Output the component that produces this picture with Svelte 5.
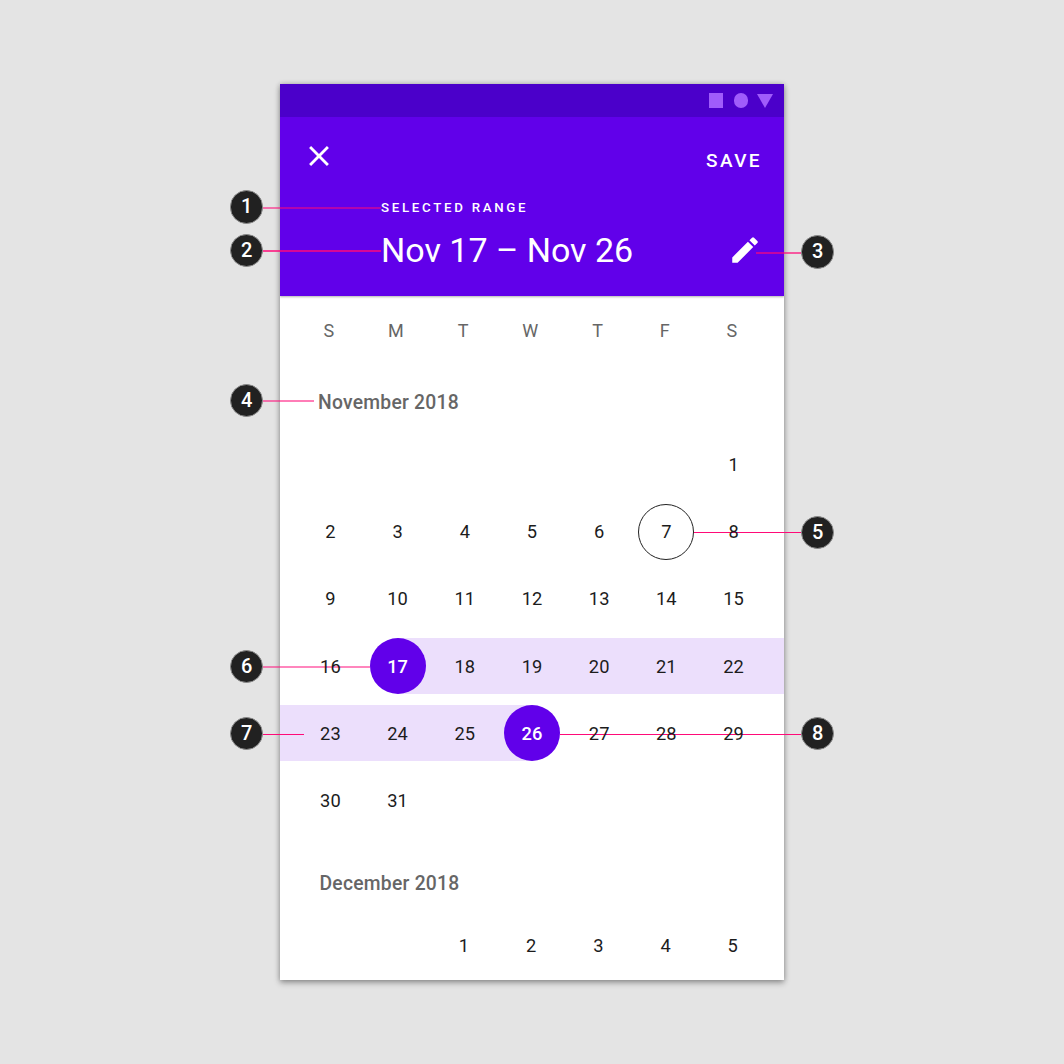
<script>
  const weekdays = ['S', 'M', 'T', 'W', 'T', 'F', 'S'];
  const november = [
    [null, null, null, null, null, null, 1],
    [2, 3, 4, 5, 6, 7, 8],
    [9, 10, 11, 12, 13, 14, 15],
    [16, 17, 18, 19, 20, 21, 22],
    [23, 24, 25, 26, 27, 28, 29],
    [30, 31, null, null, null, null, null]
  ];
  const december = [[null, null, 1, 2, 3, 4, 5]];
  const badges = [
    { n: 1, x: 246.7, y: 207 },
    { n: 2, x: 246.7, y: 250.3 },
    { n: 3, x: 817.7, y: 252 },
    { n: 4, x: 246.7, y: 400.7 },
    { n: 5, x: 817.7, y: 532.3 },
    { n: 6, x: 246.7, y: 666.3 },
    { n: 7, x: 246.7, y: 733.7 },
    { n: 8, x: 817.7, y: 733.7 }
  ];
  const lines = [
    { x: 263, y: 208, w: 118, s: 1.6, o: 0.7 },
    { x: 263, y: 251, w: 118, s: 1.4, o: 1 },
    { x: 756, y: 253, w: 45, s: 1.5, o: 0.85 },
    { x: 263, y: 401, w: 51, s: 1.4, o: 0.7 },
    { x: 694, y: 532.5, w: 107, s: 1, o: 1 },
    { x: 263, y: 667, w: 107, s: 1.6, o: 0.65 },
    { x: 263, y: 734.5, w: 41, s: 1, o: 1 },
    { x: 560, y: 734.5, w: 241, s: 1, o: 1 }
  ];
  function dayClass(d) {
    if (d === null) return 'day';
    if (d === 7) return 'day today';
    if (d === 17) return 'day start';
    if (d === 26) return 'day end';
    if (d > 17 && d < 26) return 'day inrange';
    return 'day';
  }
</script>

<div class="page">
  <section class="phone">
    <header class="header">
      <div class="status">
        <span class="sq"></span>
        <span class="ci"></span>
        <span class="tri"></span>
      </div>
      <div class="toolbar">
        <svg class="close" viewBox="0 0 24 24" width="34" height="34"><path fill="#fff" d="M19 6.41 17.59 5 12 10.59 6.41 5 5 6.41 10.59 12 5 17.59 6.41 19 12 13.41 17.59 19 19 17.59 13.41 12z"/></svg>
        <span class="save">SAVE</span>
      </div>
      <div class="label">SELECTED RANGE</div>
      <div class="rangeRow">
        <span class="range">Nov 17 – Nov 26</span>
        <svg class="edit" viewBox="0 0 24 24" width="34" height="34"><path fill="#fff" d="M3 17.25V21h3.75L17.81 9.94l-3.75-3.75L3 17.25zM20.71 7.04a1 1 0 0 0 0-1.41l-2.34-2.34a1 1 0 0 0-1.41 0l-1.83 1.83 3.75 3.75 1.83-1.83z"/></svg>
      </div>
    </header>

    <div class="week">
      {#each weekdays as w}<span>{w}</span>{/each}
    </div>

    <h2 class="month nov">November 2018</h2>
    <div class="grid">
      {#each november as row}
        <div class="row">
          {#each row as d}
            <div class={dayClass(d)}>
              {#if d !== null}<span class="num">{d}</span>{/if}
            </div>
          {/each}
        </div>
      {/each}
    </div>

    <h2 class="month dec">December 2018</h2>
    <div class="grid decgrid">
      {#each december as row}
        <div class="row decrow">
          {#each row as d}
            <div class="day">{#if d !== null}<span class="num">{d}</span>{/if}</div>
          {/each}
        </div>
      {/each}
    </div>
  </section>

  <svg class="leaders" width="1064" height="1064" viewBox="0 0 1064 1064">
    {#each lines as l}
      <line x1={l.x} x2={l.x + l.w} y1={l.y} y2={l.y} stroke="#ff0a78" stroke-width={l.s} opacity={l.o} />
    {/each}
  </svg>
  {#each badges as b}
    <b class="badge" style="left:{b.x - 16.75}px;top:{b.y - 16.75}px">{b.n}</b>
  {/each}
</div>

<style>
  :global(body) {
    margin: 0;
    background: #e4e4e4;
  }
  .page {
    position: relative;
    width: 1064px;
    height: 1064px;
    padding-top: 84px;
    box-sizing: border-box;
    overflow: hidden;
    font-family: Roboto, sans-serif;
  }
  .phone {
    width: 504px;
    height: 896px;
    margin-left: 280px;
    background: #fff;
    overflow: hidden;
    box-shadow: 0 3px 6px rgba(0, 0, 0, 0.3), 0 0 5px rgba(0, 0, 0, 0.22);
  }
  .header {
    height: 212px;
    background: #6100ea;
    color: #fff;
    box-shadow: 0 1px 2px rgba(0, 0, 0, 0.3);
    position: relative;
  }
  .status {
    height: 33px;
    background: #4b00ca;
    display: flex;
    align-items: center;
    justify-content: flex-end;
    padding-right: 11.3px;
    gap: 10.6px;
  }
  .sq {
    width: 14.5px;
    height: 14.5px;
    background: #a05cfb;
  }
  .ci {
    width: 14.5px;
    height: 14.5px;
    border-radius: 50%;
    background: #a05cfb;
  }
  .tri {
    width: 0;
    height: 0;
    border-left: 8.35px solid transparent;
    border-right: 8.35px solid transparent;
    border-top: 14px solid #a05cfb;
    margin-left: -2.3px;
  }
  .toolbar {
    display: flex;
    justify-content: space-between;
    align-items: center;
    height: 50px;
    padding: 14px 22px 0 22px;
  }
  .save {
    font-size: 19px;
    font-weight: 500;
    letter-spacing: 2.4px;
    margin-top: 9px;
  }
  .label {
    font-size: 13.3px;
    font-weight: 500;
    letter-spacing: 2.7px;
    margin: 19px 0 0 101px;
    line-height: 16px;
  }
  .rangeRow {
    display: flex;
    justify-content: space-between;
    align-items: center;
    margin: 11px 22px 0 101px;
    height: 46px;
  }
  .range {
    font-size: 34px;
    line-height: 46px;
  }
  .week {
    display: grid;
    grid-template-columns: repeat(7, 67.2px);
    padding: 25px 0 0 15.2px;
    color: #666;
    font-size: 18px;
    line-height: 20px;
    text-align: center;
  }
  .month {
    font-size: 19.3px;
    font-weight: 500;
    letter-spacing: 0.25px;
    color: #666;
    margin: 0;
    line-height: 24px;
  }
  .nov {
    padding: 50px 0 0 38px;
  }
  .dec {
    padding: 38px 0 0 39.5px;
  }
  .grid {
    margin-top: 16px;
  }
  .decgrid {
    margin-top: 16px;
  }
  .row {
    display: grid;
    grid-template-columns: repeat(7, 67.2px);
    padding: 0 16.8px;
    height: 67.2px;
    align-items: center;
    position: relative;
  }
  .decrow {
    padding-left: 16px;
  }
  .day {
    height: 56px;
    display: flex;
    align-items: center;
    justify-content: center;
    font-size: 18.3px;
    color: #1c1c1c;
    position: relative;
  }
  .num {
    position: relative;
    z-index: 1;
  }
  .inrange {
    background: #ecdffc;
  }
  .row:nth-child(5) .day:first-child {
    background: #ecdffc;
    margin-left: -16.8px;
    padding-left: 16.8px;
  }
  .row:nth-child(4) .day:last-child {
    background: #ecdffc;
    margin-right: -16.8px;
    padding-right: 16.8px;
  }
  .row:nth-child(5) .day:last-child {
    background: none;
  }
  .today::before,
  .start::before,
  .end::before {
    content: '';
    position: absolute;
    left: 50%;
    top: 0;
    width: 56px;
    height: 56px;
    margin-left: -28px;
    border-radius: 50%;
    box-sizing: border-box;
  }
  .today::before {
    border: 1.5px solid #222;
  }
  .start,
  .end {
    color: #fff;
    font-weight: 500;
  }
  .start::before,
  .end::before {
    background: #6100ea;
  }
  .start {
    background: linear-gradient(90deg, transparent 50%, #ecdffc 50%);
  }
  .end {
    background: linear-gradient(90deg, #ecdffc 50%, transparent 50%);
  }
  .leaders {
    position: absolute;
    left: 0;
    top: 0;
    pointer-events: none;
  }
  .badge {
    position: absolute;
    width: 33.5px;
    height: 33.5px;
    box-sizing: border-box;
    border-radius: 50%;
    background: #212121;
    border: 1px solid #8a8a8a;
    color: #fff;
    font-size: 20px;
    font-weight: 500;
    line-height: 31.5px;
    text-align: center;
  }
</style>
